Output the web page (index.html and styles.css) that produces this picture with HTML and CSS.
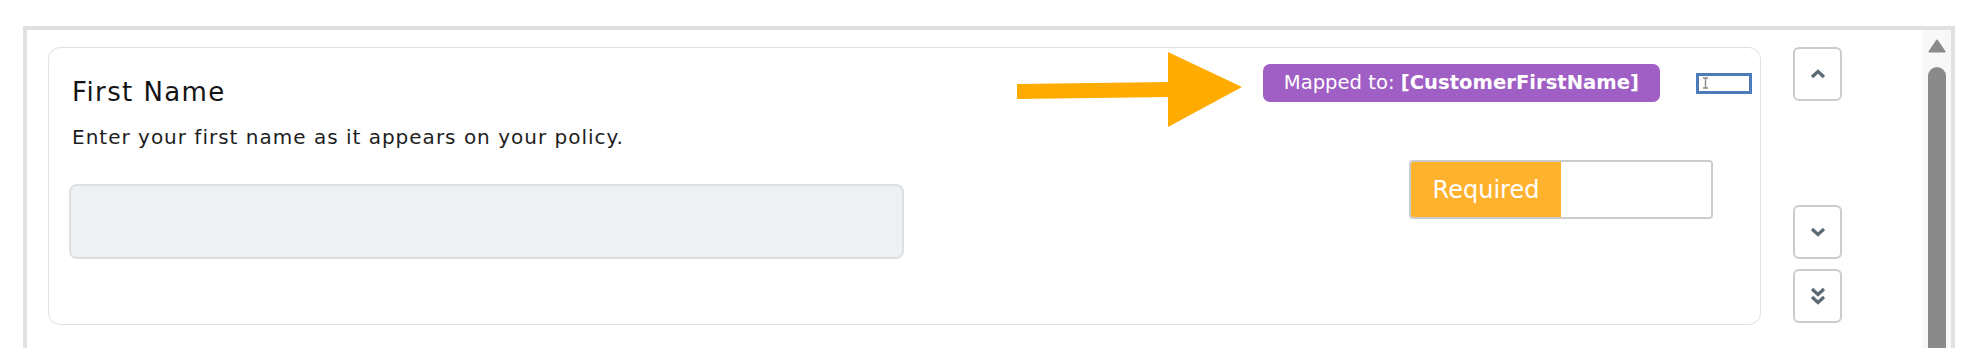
FILE: index.html
```html
<!DOCTYPE html>
<html lang="en">
<head>
    <meta charset="UTF-8">
    <meta name="viewport" content="width=device-width, initial-scale=1.0">
    <title>Form Field</title>
    <link rel="stylesheet" href="styles.css">
</head>
<body>

    <div class="panel">
        <div class="panel-content">
            <div class="field-card">
                <!-- Annotation arrow drawn over the card -->
                <svg class="callout-arrow" width="226" height="76" viewBox="0 0 226 76">
                    <polygon points="0,32 152,30 152,45 0,47" fill="#ffab00"/>
                    <polygon points="151,0 225,35 151,75" fill="#ffab00"/>
                </svg>

                <div class="field-main">
                    <div class="field-title">First Name</div>
                    <div class="field-desc">Enter your first name as it appears on your policy.</div>
                    <div class="field-input"></div>
                </div>

                <div class="field-side">
                    <div class="side-top">
                        <div class="mapped-badge">Mapped to: <b>[CustomerFirstName]</b></div>
                        <div class="order-input">
                            <svg width="7" height="12" viewBox="0 0 7 12">
                                <path d="M1 1h5M3.5 1v10M1 11h5" stroke="#8a8a8a" stroke-width="1.4" fill="none"/>
                            </svg>
                        </div>
                    </div>
                    <div class="required-toggle">
                        <div class="toggle-on">Required</div>
                        <div class="toggle-off"></div>
                    </div>
                </div>
            </div>

            <div class="move-buttons">
                <div class="move-btn move-up">
                    <svg width="16" height="10" viewBox="0 0 16 10">
                        <path d="M2 8l6-5.5 6 5.5" stroke="#5b6b76" stroke-width="3.2" fill="none"/>
                    </svg>
                </div>
                <div class="move-btn move-down">
                    <svg width="16" height="10" viewBox="0 0 16 10">
                        <path d="M2 2l6 5.5 6-5.5" stroke="#5b6b76" stroke-width="3.2" fill="none"/>
                    </svg>
                </div>
                <div class="move-btn">
                    <svg width="16" height="18" viewBox="0 0 16 18">
                        <path d="M2 2l6 5.5 6-5.5M2 10l6 5.5 6-5.5" stroke="#5b6b76" stroke-width="3.2" fill="none"/>
                    </svg>
                </div>
            </div>
        </div>

        <div class="scrollbar">
            <svg class="scroll-arrow" width="18" height="14" viewBox="0 0 18 14">
                <path d="M9 1.5L16.5 12.5H1.5Z" fill="#8a8a8a" stroke="#8a8a8a" stroke-width="2" stroke-linejoin="round"/>
            </svg>
            <div class="scroll-thumb"></div>
        </div>
    </div>

</body>
</html>
```

FILE: styles.css
```css
body {
    font-family: 'DejaVu Sans', sans-serif;
    background-color: #fff;
    margin: 0;
    padding: 0;
    overflow: hidden;
}

/* El panel sigue por debajo del borde inferior */
.panel {
    display: flex;
    margin: 26px 23px 0;
    height: 318px;
    border: 4px solid #e0e0e0;
    border-bottom: 0;
    background-color: #fff;
}

.panel-content {
    flex: 1;
    display: flex;
    align-items: flex-start;
    padding: 17px 0 0 21px;
}

/* Tarjeta del campo */
.field-card {
    flex: 1;
    display: flex;
    align-items: flex-start;
    position: relative;
    padding: 16px 8px 65px 20px;
    border: 1px solid #dde1e6;
    border-radius: 12px;
}

.callout-arrow {
    position: absolute;
    left: 968px;
    top: 4px;
}

.field-main {
    width: 835px;
    padding-top: 13px;
}

.field-title {
    font-size: 26px;
    line-height: 30px;
    letter-spacing: 1.4px;
    color: #141414;
    padding-left: 3px;
}

.field-desc {
    margin-top: 18px;
    font-size: 20px;
    line-height: 24px;
    letter-spacing: 1px;
    color: #1e1e1e;
    padding-left: 3px;
}

.field-input {
    margin-top: 35px;
    height: 71px;
    background-color: #eff0f2;
    border: 2px solid #dcdfe4;
    border-radius: 8px;
}

.field-side {
    margin-left: auto;
    display: flex;
    flex-direction: column;
    align-items: flex-end;
}

.side-top {
    display: flex;
    align-items: center;
}

.mapped-badge {
    height: 38px;
    line-height: 38px;
    padding: 0 21px 0 21px;
    background-color: #9f5fc4;
    color: #fff;
    font-size: 19.6px;
    border-radius: 7px;
}

.order-input {
    margin-left: 36px;
    width: 47px;
    height: 15px;
    border: 3px solid #4b7bb8;
    display: flex;
    align-items: center;
    padding-left: 3px;
}

.required-toggle {
    display: flex;
    margin-top: 58px;
    margin-right: 39px;
    width: 300px;
    height: 55px;
    border: 2px solid #cccccc;
    border-radius: 4px;
    overflow: hidden;
}

.toggle-on {
    width: 150px;
    background-color: #ffb22e;
    color: #fff;
    font-size: 24px;
    display: flex;
    align-items: center;
    justify-content: center;
}

.toggle-off {
    flex: 1;
    background-color: #fff;
}

/* Botones para mover el campo */
.move-buttons {
    display: flex;
    flex-direction: column;
    margin-left: 32px;
    margin-right: 80px;
}

.move-btn {
    width: 45px;
    height: 50px;
    border: 2px solid #cccccc;
    border-radius: 6px;
    display: flex;
    align-items: center;
    justify-content: center;
    margin-bottom: 10px;
}

.move-up {
    margin-bottom: 104px;
}

.scrollbar {
    width: 29px;
    background-color: #f8f8f8;
    display: flex;
    flex-direction: column;
    align-items: center;
    padding-top: 9px;
}

.scroll-thumb {
    margin-top: 14px;
    width: 18px;
    flex: 1;
    background-color: #8a8a8a;
    border-radius: 9px 9px 0 0;
}
```
